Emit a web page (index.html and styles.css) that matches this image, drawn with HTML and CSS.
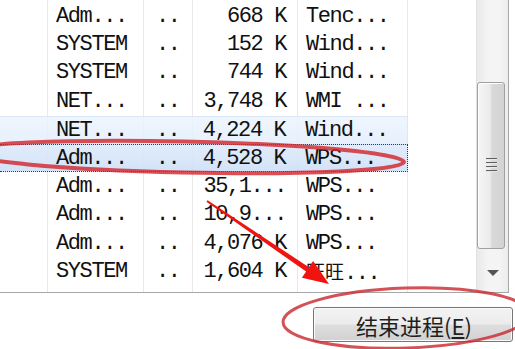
FILE: index.html
```html
<!DOCTYPE html>
<html lang="zh-CN">
<head>
    <meta charset="UTF-8">
    <title>进程列表</title>
    <link rel="stylesheet" href="styles.css">
</head>
<body>

    <div class="window">
        <div class="list-box">
            <div class="rows">
                <div class="row"><span class="c0"></span><span class="c1">Adm...</span><span class="c2">..</span><span class="c3">668 K</span><span class="c4">Tenc...</span></div>
                <div class="row"><span class="c0"></span><span class="c1">SYSTEM</span><span class="c2">..</span><span class="c3">152 K</span><span class="c4">Wind...</span></div>
                <div class="row"><span class="c0"></span><span class="c1">SYSTEM</span><span class="c2">..</span><span class="c3">744 K</span><span class="c4">Wind...</span></div>
                <div class="row"><span class="c0"></span><span class="c1">NET...</span><span class="c2">..</span><span class="c3">3,748 K</span><span class="c4">WMI ...</span></div>
                <div class="row hot"><span class="c0"></span><span class="c1">NET...</span><span class="c2">..</span><span class="c3">4,224 K</span><span class="c4">Wind...</span></div>
                <div class="row selected"><span class="c0"></span><span class="c1">Adm...</span><span class="c2">..</span><span class="c3">4,528 K</span><span class="c4">WPS...</span></div>
                <div class="row"><span class="c0"></span><span class="c1">Adm...</span><span class="c2">..</span><span class="c3">35,1...</span><span class="c4">WPS...</span></div>
                <div class="row"><span class="c0"></span><span class="c1">Adm...</span><span class="c2">..</span><span class="c3">10,9...</span><span class="c4">WPS...</span></div>
                <div class="row"><span class="c0"></span><span class="c1">Adm...</span><span class="c2">..</span><span class="c3">4,076 K</span><span class="c4">WPS...</span></div>
                <div class="row"><span class="c0"></span><span class="c1">SYSTEM</span><span class="c2">..</span><span class="c3">1,604 K</span><span class="c4"><span class="cjk">旺旺</span>...</span></div>
            </div>

            <!-- vertical scrollbar, top part is out of view -->
            <div class="scrollbar">
                <div class="thumb"><span class="grip"></span></div>
                <div class="arrow-down"><span class="tri"></span></div>
            </div>
        </div>

        <div class="actions">
            <button class="end-btn">结束进程(<u>E</u>)</button>
        </div>

        <!-- hand drawn marks on top of the screenshot -->
        <svg class="marks" width="515" height="349" viewBox="0 0 515 349">
            <ellipse cx="184" cy="157" rx="220" ry="15.5" transform="rotate(1.3 184 157)" fill="none" stroke="#d3262c" stroke-opacity="0.82" stroke-width="4"/>
            <ellipse cx="406" cy="318" rx="123" ry="30" transform="rotate(-2 406 318)" fill="none" stroke="#c9262c" stroke-opacity="0.8" stroke-width="3"/>
            <polygon points="206.4,201.8 306.1,271.5 301.9,277.7 329,284 313.1,261.1 308.9,267.3 207.6,200.2" fill="#f0130f"/>
        </svg>
    </div>

</body>
</html>
```

FILE: styles.css
```css
* {
    box-sizing: border-box;
    margin: 0;
    padding: 0;
}

body {
    background: #fff;
    font-family: "Liberation Mono", monospace;
}

.window {
    position: relative;
    width: 515px;
    height: 349px;
    overflow: hidden;
}

.list-box {
    display: flex;
    width: 509px;
    height: 293px;
    border-right: 1px solid #a6a6a6;
    border-bottom: 1px solid #a6a6a6;
}

/* column separators run the whole height of the list */
.rows {
    width: 476px;
    padding-top: 2px;
    background:
        linear-gradient(#e9e9e9, #e9e9e9) 47px 0 / 1px 100% no-repeat,
        linear-gradient(#e9e9e9, #e9e9e9) 143px 0 / 1px 100% no-repeat,
        linear-gradient(#e9e9e9, #e9e9e9) 192px 0 / 1px 100% no-repeat,
        linear-gradient(#e9e9e9, #e9e9e9) 297px 0 / 1px 100% no-repeat,
        linear-gradient(#e9e9e9, #e9e9e9) 407px 0 / 1px 100% no-repeat,
        #fff;
}

.row {
    display: flex;
    align-items: center;
    width: 408px;
    height: 28.4px;
    font-size: 22px;
    letter-spacing: -1.4px;
    color: #111;
    white-space: nowrap;
}

.row span {
    overflow: hidden;
}

.c0 { width: 47px; }
.c1 { width: 96px; padding-left: 9px; }
.c2 { width: 49px; padding-left: 13px; }
.c3 { width: 105px; padding-right: 11px; text-align: right; }
.c4 { width: 111px; padding-left: 9px; }

.cjk {
    font-family: "Noto Sans CJK SC", sans-serif;
    font-size: 19px;
    letter-spacing: 0;
}

.row.hot {
    background: linear-gradient(rgba(236, 244, 253, 0.85), rgba(226, 238, 252, 0.85));
    border-top: 1px solid #d9e7f7;
    border-right: 1px solid #d9e7f7;
}

.row.selected {
    background: linear-gradient(rgba(222, 234, 250, 0.9), rgba(206, 224, 247, 0.9));
    border-top: 1px dotted #3a3a3a;
    border-bottom: 1px dotted #3a3a3a;
    border-right: 1px dotted #3a3a3a;
}

/* scrollbar */
.scrollbar {
    display: flex;
    flex-direction: column;
    width: 32px;
    border-left: 1px solid #e2e2e2;
    background: linear-gradient(90deg, #e9e9e9, #f4f4f4 35%, #f4f4f4 70%, #ececec);
}

.thumb {
    display: flex;
    align-items: center;
    justify-content: center;
    width: 28px;
    height: 167px;
    margin-top: 82px;
    border: 1px solid #a0a0a0;
    border-radius: 3px;
    background: linear-gradient(90deg, #f5f5f5, #ebebeb 45%, #d9d9d9 55%, #d3d3d3);
    box-shadow: inset 1px 1px 0 #fff;
}

.grip {
    display: block;
    width: 11px;
    height: 15px;
    background: repeating-linear-gradient(#5e5e5e 0, #5e5e5e 1px, #e8e8e8 1px, #e8e8e8 2px, transparent 2px, transparent 4px);
}

.arrow-down {
    flex: 1;
    display: flex;
    align-items: center;
    justify-content: center;
    padding-top: 4px;
}

.tri {
    width: 0;
    height: 0;
    border-left: 6px solid transparent;
    border-right: 6px solid transparent;
    border-top: 6px solid #555;
}

/* bottom button */
.actions {
    display: flex;
    justify-content: flex-end;
    padding: 14px 2px 0 0;
}

.end-btn {
    width: 200px;
    height: 35px;
    border: 1px solid #767676;
    border-radius: 3px;
    background: linear-gradient(#f3f3f3, #ececec 48%, #dedede 52%, #d1d1d1);
    box-shadow: inset 0 0 0 1px #fbfbfb;
    font-family: "Noto Sans CJK SC", sans-serif;
    font-size: 22px;
    color: #1f1f1f;
    padding-left: 2px;
}

.end-btn u {
    text-underline-offset: 2px;
}

.marks {
    position: absolute;
    top: 0;
    left: 0;
    pointer-events: none;
}
```
